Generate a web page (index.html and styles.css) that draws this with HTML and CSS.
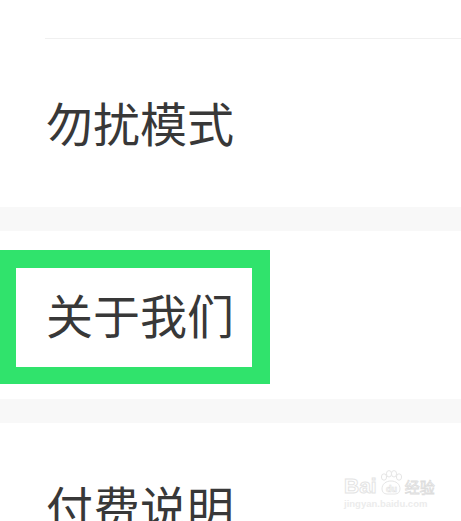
FILE: index.html
```html
<!DOCTYPE html>
<html lang="zh">
<head>
<meta charset="utf-8">
<link rel="stylesheet" href="styles.css">
</head>
<body>
<div class="list">
  <div class="stub"></div>
  <div class="divider"></div>
  <div class="row"><span class="label">勿扰模式</span></div>
  <div class="band"></div>
  <div class="row highlighted"><span class="label">关于我们</span><div class="mark"></div></div>
  <div class="band"></div>
  <div class="row"><span class="label">付费说明</span></div>
</div>
<div class="watermark">
  <div class="wm-logo">
    <span class="wm-bai">Bai</span>
    <span class="wm-paw">
      <svg width="26" height="26" viewBox="0 0 26 26">
        <g fill="#fff" stroke="#e6e6e6" stroke-width="1">
          <ellipse cx="6" cy="7" rx="2.6" ry="3.2"/>
          <ellipse cx="11" cy="3.8" rx="2.6" ry="3.2"/>
          <ellipse cx="16" cy="3.8" rx="2.6" ry="3.2"/>
          <ellipse cx="21" cy="7" rx="2.6" ry="3.2"/>
          <path d="M4 19c0-5 4-8 9-8s9 3 9 8c0 3-2 5-5 5H9c-3 0-5-2-5-5z"/>
        </g>
        <text x="13.5" y="21.5" text-anchor="middle" font-family="Liberation Sans, sans-serif" font-size="9" font-weight="bold" fill="#fff" stroke="#e2e2e2" stroke-width="0.6">du</text>
      </svg>
    </span>
    <span class="wm-jy">经验</span>
  </div>
  <div class="wm-url">jingyan.baidu.com</div>
</div>
</body>
</html>
```

FILE: styles.css
```css
html, body {
  margin: 0;
  padding: 0;
  background: #ffffff;
}
body {
  width: 461px;
  height: 521px;
  overflow: hidden;
  position: relative;
  font-family: "Noto Sans CJK SC", "Noto Sans", sans-serif;
}
.list {
  display: flex;
  flex-direction: column;
}
.stub {
  height: 38px;
}
.divider {
  height: 1px;
  margin-left: 45px;
  background: #f0f0f0;
}
.row {
  height: 168px;
  box-sizing: border-box;
  display: flex;
  align-items: center;
  padding-left: 46px;
  padding-bottom: 4px;
  position: relative;
  flex-shrink: 0;
}
.label {
  font-size: 47px;
  line-height: 1;
  color: #383838;
  letter-spacing: 0;
}
.band {
  height: 24px;
  background: #f8f8f8;
  flex-shrink: 0;
}
.mark {
  position: absolute;
  left: -2px;
  top: 19px;
  width: 236px;
  height: 99px;
  border: 18px solid #30e36c;
  border-bottom-width: 17px;
  pointer-events: none;
}
.watermark {
  position: absolute;
  left: 344px;
  top: 470px;
  display: flex;
  flex-direction: column;
  align-items: flex-start;
}
.wm-logo {
  display: flex;
  align-items: flex-end;
  height: 26px;
}
.wm-bai {
  font-family: "Liberation Sans", sans-serif;
  font-weight: bold;
  font-size: 21px;
  line-height: 1;
  color: #ffffff;
  -webkit-text-stroke: 1px #e4e4e4;
}
.wm-paw {
  display: block;
  width: 26px;
  height: 26px;
  margin-left: 1px;
}
.wm-jy {
  font-size: 15px;
  line-height: 1;
  color: #ffffff;
  -webkit-text-stroke: 0.8px #dddddd;
  margin-left: 1px;
  margin-bottom: 2px;
}
.wm-url {
  font-family: "Liberation Sans", sans-serif;
  font-weight: bold;
  font-size: 9.5px;
  line-height: 1;
  color: #ececec;
  margin-top: 3px;
}
```
